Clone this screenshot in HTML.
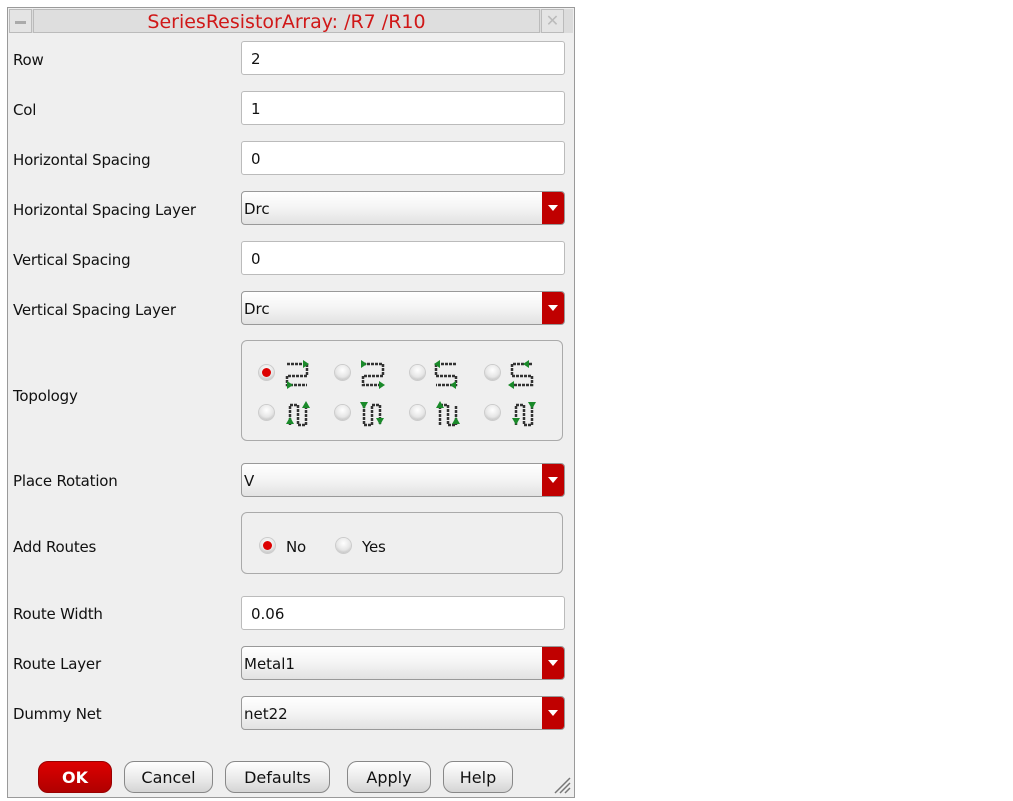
<!DOCTYPE html>
<html><head><meta charset="utf-8"><style>
body{margin:0;width:1013px;height:801px;background:#fff;font-family:"DejaVu Sans",sans-serif;position:relative;overflow:hidden}
.dlg{position:absolute;left:7px;top:7px;width:566px;height:789px;background:#efefef;border:1px solid #9a9a9a}
.tb{position:absolute;left:9px;top:9px;width:564px;height:24px;background:#dcdcdc}
.tbtn{position:absolute;top:9px;width:23px;height:24px;background:#e4e4e4;border:1px solid #bbb;box-sizing:border-box}
.title{position:absolute;left:33px;top:9px;width:507px;height:24px;line-height:24px;text-align:center;color:#d01818;font-size:19px;border:1px solid #bbb;box-sizing:border-box;background:#dedede}
.lbl{position:absolute;left:13px;font-size:15px;color:#111;margin-top:1px;letter-spacing:-0.2px}
.in{position:absolute;left:241px;width:324px;height:34px;background:#fff;border:1px solid #bbb;border-radius:3px;box-sizing:border-box;font-size:15px;line-height:34px;padding-left:9px;color:#111}
.dd{position:absolute;left:241px;width:324px;height:34px;border:1px solid #999;border-radius:4px;box-sizing:border-box;background:linear-gradient(#fff,#f4f4f4 50%,#e2e2e2);font-size:15px;line-height:34px;padding-left:2px;color:#111;overflow:hidden}
.dd:after{content:"";position:absolute;right:0;top:0;width:22px;height:32px;background:#c00000}
.dd i{position:absolute;right:6px;top:13px;width:0;height:0;border-left:5px solid transparent;border-right:5px solid transparent;border-top:6px solid #fff;z-index:2}
.box{position:absolute;left:241px;width:322px;border:1px solid #aaa;border-radius:6px;box-sizing:border-box}
.rad{position:absolute;width:15px;height:15px;border-radius:50%;background:radial-gradient(circle at 50% 35%,#fff,#e6e6e6 55%,#aaa);box-shadow:0 0 0 1px #ccc}
.rad.on:after{content:"";position:absolute;left:3px;top:3px;width:9px;height:9px;border-radius:50%;background:#d00}
.btn{position:absolute;top:761px;height:32px;border:1px solid #888;border-radius:10px;box-sizing:border-box;background:linear-gradient(#fff,#e8e8e8 60%,#d4d4d4);font-size:16px;text-align:center;line-height:32px;color:#111}
</style></head><body>
<div class="dlg"></div>
<div class="tb"></div>
<div class="tbtn" style="left:9px"><div style="position:absolute;left:5px;top:11px;width:11px;height:3px;background:#aaa"></div></div>
<div class="title">SeriesResistorArray: /R7 /R10</div>
<div class="tbtn" style="left:541px;color:#bbb;font-size:16px;text-align:center;line-height:22px">✕</div>

<div class="lbl" style="top:50px">Row</div><div class="in" style="top:41px">2</div>
<div class="lbl" style="top:100px">Col</div><div class="in" style="top:91px">1</div>
<div class="lbl" style="top:150px">Horizontal Spacing</div><div class="in" style="top:141px">0</div>
<div class="lbl" style="top:200px">Horizontal Spacing Layer</div><div class="dd" style="top:191px">Drc<i></i></div>
<div class="lbl" style="top:250px">Vertical Spacing</div><div class="in" style="top:241px">0</div>
<div class="lbl" style="top:300px">Vertical Spacing Layer</div><div class="dd" style="top:291px">Drc<i></i></div>
<div class="lbl" style="top:386px">Topology</div>
<div class="box" style="top:340px;height:101px"></div>
<div class="rad on" style="left:259px;top:365px"></div>
<div class="rad" style="left:335px;top:365px"></div>
<div class="rad" style="left:410px;top:365px"></div>
<div class="rad" style="left:485px;top:365px"></div>
<div class="rad" style="left:259px;top:405px"></div>
<div class="rad" style="left:335px;top:405px"></div>
<div class="rad" style="left:410px;top:405px"></div>
<div class="rad" style="left:485px;top:405px"></div>
<svg style="position:absolute;left:0;top:0" width="580" height="450">
<g fill="none" stroke="#333" stroke-width="2.5" stroke-dasharray="3,1">
<path d="M287 364h20v12h-20v9h20"/><path d="M363 364h20v12h-20v9h20"/><path d="M456 364h-20v12h20v9h-20"/><path d="M532 364h-20v12h20v9h-20"/>
<path d="M290 425v-20h8v20h8v-20"/><path d="M364 405v20h8v-20h8v20"/><path d="M440 425v-20h8v20h8v-20"/><path d="M516 425v-20h8v20h8v-20"/></g>
<g fill="#1a8a2a"><path d="M303 360l6 4-6 4z"/><path d="M287 381l6 4-6 4z"/><path d="M361 360l6 4-6 4z"/><path d="M379 381l6 4-6 4z"/><path d="M440 360l-6 4 6 4z"/><path d="M456 381l-6 4 6 4z"/><path d="M529 360l-6 4 6 4z"/><path d="M514 381l-6 4 6 4z"/>
<path d="M286 424l4-7 4 7z"/><path d="M302 408l4-7 4 7z"/><path d="M360 402l4 7 4-7z"/><path d="M376 418l4 7 4-7z"/><path d="M436 408l4-7 4 7z"/><path d="M452 424l4-7 4 7z"/><path d="M512 418l4 7 4-7z"/><path d="M528 402l4 7 4-7z"/></g>
</svg>
<div class="lbl" style="top:471px">Place Rotation</div><div class="dd" style="top:463px">V<i></i></div>
<div class="lbl" style="top:537px">Add Routes</div>
<div class="box" style="top:512px;height:62px"></div>
<div class="rad on" style="left:260px;top:538px"></div><div class="lbl" style="left:286px;top:537px">No</div>
<div class="rad" style="left:336px;top:538px"></div><div class="lbl" style="left:362px;top:537px">Yes</div>
<div class="lbl" style="top:604px">Route Width</div><div class="in" style="top:596px">0.06</div>
<div class="lbl" style="top:654px">Route Layer</div><div class="dd" style="top:646px">Metal1<i></i></div>
<div class="lbl" style="top:704px">Dummy Net</div><div class="dd" style="top:696px">net22<i></i></div>
<div class="btn" style="left:38px;width:74px;background:linear-gradient(#d00,#b00000);border-color:#900;color:#fff;font-weight:bold">OK</div>
<div class="btn" style="left:124px;width:89px">Cancel</div>
<div class="btn" style="left:225px;width:105px">Defaults</div>
<div class="btn" style="left:347px;width:84px">Apply</div>
<div class="btn" style="left:443px;width:70px">Help</div>
<svg style="position:absolute;left:553px;top:776px" width="18" height="18"><path d="M2 17L17 2M7 17L17 7M12 17L17 12" stroke="#777" stroke-width="1.5"/></svg>
</body></html>
